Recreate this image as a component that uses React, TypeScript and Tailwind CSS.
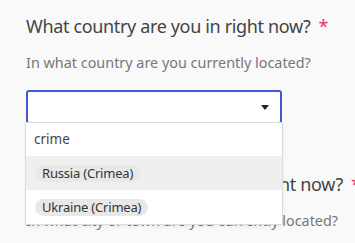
import React from 'react';

function Question({ title, hint }: { title: string; hint: string }) {
  return (
    <div>
      <h2 className="whitespace-nowrap text-[18px] leading-[24px] text-[#444] tracking-[-0.35px]">
        {title}
        <span className="ml-[8px] text-[#e8336d]">*</span>
      </h2>
      <p className="mt-[15px] whitespace-nowrap text-[14.4px] leading-[20px] text-[#777]">{hint}</p>
    </div>
  );
}

export default function App() {
  const options = ['Russia (Crimea)', 'Ukraine (Crimea)'];

  return (
    <div
      className="w-[355px] h-[243px] overflow-hidden bg-[#f9f9f9] pl-[26px] pt-[14px]"
      style={{ fontFamily: '"Noto Sans", "Open Sans", sans-serif' }}
    >
      <Question title="What country are you in right now?" hint="In what country are you currently located?" />

      {/* Select + open dropdown */}
      <div className="relative mt-[17px] w-[256px]">
        <div className="flex h-[34px] items-center justify-end rounded-[3px] border-2 border-[#4458d6] bg-white pr-[11px]">
          <span className="block h-0 w-0 border-x-[4px] border-t-[5px] border-x-transparent border-t-[#222]" />
        </div>
        <div className="absolute left-[-1px] right-[-1px] top-[32px] z-10 border border-[#dcdcdc] bg-white shadow-[0_2px_4px_rgba(0,0,0,0.06)]">
          <div className="flex h-[33px] items-center px-[8px] text-[13.5px] text-[#444]">crime</div>
          {options.map((o, i) => (
            <div
              key={o}
              className={`flex h-[34px] items-center px-[9px] ${i === 0 ? 'bg-[#efefef]' : 'bg-white'}`}
            >
              <span className="rounded-full bg-[#e8e8e8] px-[7px] text-[13px] leading-[17px] tracking-[-0.2px] text-[#333]">
                {o}
              </span>
            </div>
          ))}
        </div>
      </div>

      <div className="mt-[48px]">
        <Question title="What city or town are you in right now?" hint="In what city or town are you currently located?" />
      </div>
    </div>
  );
}
